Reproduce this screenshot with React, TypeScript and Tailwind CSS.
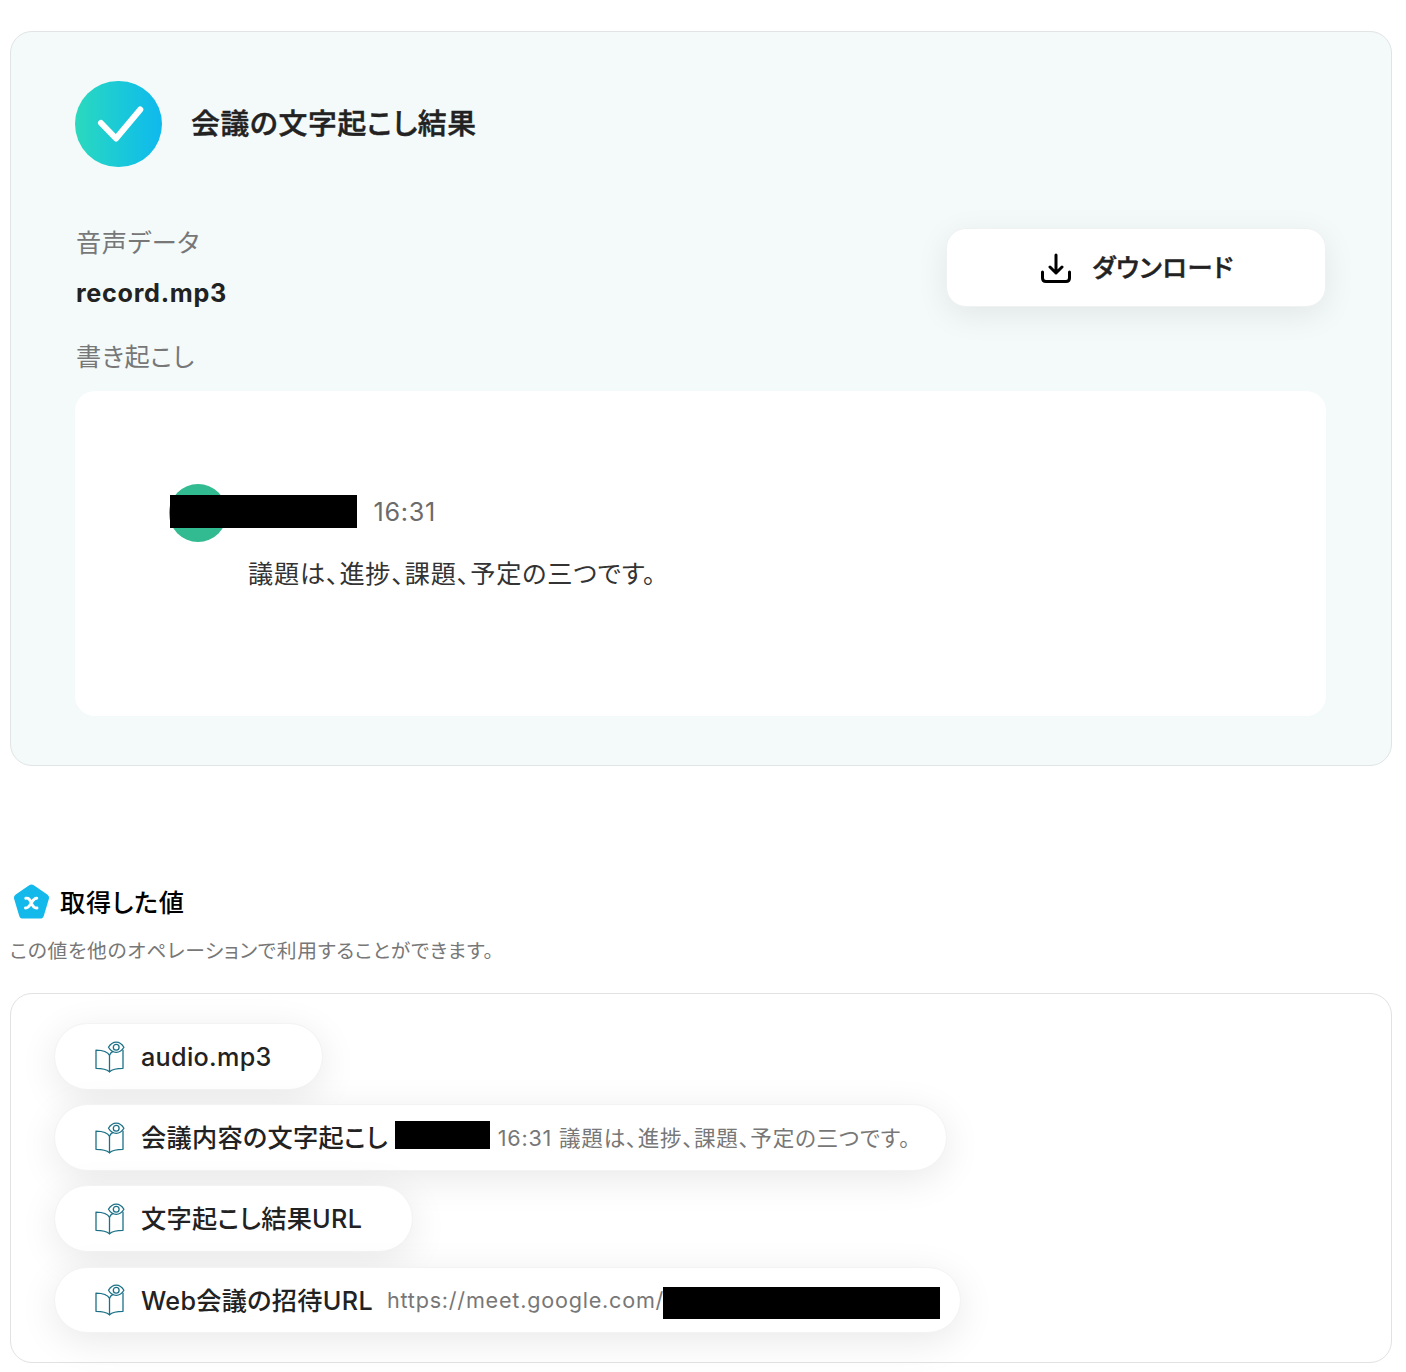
import React from 'react';

interface ValueItem {
  id: string;
  label: string;
  width: string;
  detail?: React.ReactNode;
}

const BookEyeIcon: React.FC = () => (
  <svg className="w-[30px] h-8 shrink-0 mt-px" viewBox="0 0 30 32" fill="none" stroke="#1b7187" strokeWidth="1.3" strokeLinejoin="round" strokeLinecap="round">
    <path d="M14.5 14.2C12.6 10.6 7.6 9.2 1 9.1V27.3C7.5 27.3 11.6 28.2 14.5 30.8C17.2 28.2 21.5 27.3 28 27.3V9.2" />
    <path d="M14.5 30.8V14.2C15.1 12.6 16.2 11.4 18 10.4" />
    <path d="M13.5 6.3C15.5 2.8 18.2 1.1 21.2 1.1S26.9 2.8 28.9 6.3C26.9 9.8 24.2 11.3 21.2 11.3S15.5 9.8 13.5 6.3Z" />
    <circle cx="21.2" cy="6.3" r="2.9" />
  </svg>
);

const items: ValueItem[] = [
  { id: 'audio', label: 'audio.mp3', width: 'w-[269px]' },
  {
    id: 'transcript',
    label: '会議内容の文字起こし',
    width: 'w-[893px]',
    detail: (
      <>
        <span className="w-[95px] h-7 ml-[7px] mb-[5px] bg-black shrink-0" />
        <span className="pt-px ml-[8px] text-[21.6px] tracking-[0.036em] text-[#777]">16:31 議題は、進捗、課題、予定の三つです。</span>
      </>
    ),
  },
  { id: 'result-url', label: '文字起こし結果URL', width: 'w-[359px]' },
  {
    id: 'invite-url',
    label: 'Web会議の招待URL',
    width: 'w-[907px]',
    detail: (
      <>
        <span className="ml-[14px] text-[21.6px] tracking-[0.036em] text-[#777]">https://meet.google.com/</span>
        <span className="w-[277px] h-8 mt-[6px] -ml-px bg-black shrink-0" />
      </>
    ),
  },
];

const App: React.FC = () => {
  return (
    <div className="h-[1372px] overflow-hidden bg-white pt-[31px] pl-[10px] pr-[14px] text-[#222] whitespace-nowrap font-[Inter,'Noto_Sans_CJK_JP',sans-serif] [font-feature-settings:'palt']">
      <section className="h-[735px] rounded-[22px] border border-[#e0e4e4] bg-[#f4fafa] pt-[49px] pl-16 pr-[65px]">
        <div className="flex items-center gap-[29px]">
          <div className="w-[87px] h-[86px] rounded-full bg-linear-to-r from-[#2bd9bd] to-[#10b9ee]">
            <svg className="w-full h-full" viewBox="0 0 87 86" fill="none" stroke="#fff" strokeWidth="6" strokeLinecap="round" strokeLinejoin="round">
              <path d="M26 42L41 57.5L65.3 28.5" />
            </svg>
          </div>
          <h1 className="text-[28.8px] font-medium [-webkit-text-stroke:0.5px_#222] leading-10 tracking-[0.025em]">会議の文字起こし結果</h1>
        </div>

        <div className="flex justify-between mt-[55px]">
          <div className="pl-px">
            <p className="h-10 pt-px leading-10 text-[25.2px] tracking-[0.025em] text-[#777]">音声データ</p>
            <p className="h-10 mt-[11px] leading-10 text-[25.2px] font-bold tracking-[0.028em]">record.mp3</p>
            <p className="h-10 mt-[23px] pt-px leading-10 text-[25.2px] tracking-[0.025em] text-[#777]">書き起こし</p>
          </div>
          <button className="flex items-center justify-center gap-[21px] w-[380px] h-[79px] mt-[6px] rounded-[20px] border border-[#f0f2f2] bg-white shadow-[0_8px_32px_rgba(0,0,0,0.08)] pl-[3px]">
            <svg className="w-[30px] h-[30px]" viewBox="0 0 30 30" fill="none" stroke="#000" strokeWidth="3" strokeLinecap="round" strokeLinejoin="round">
              <path d="M15 2V20M9 14L15 20L21 14" />
              <path d="M1.5 19V25Q1.5 28.5 5 28.5H25Q28.5 28.5 28.5 25V19" />
            </svg>
            <span className="pt-[2px] text-[25.2px] font-medium [-webkit-text-stroke:0.5px_#222] tracking-[0.025em]">ダウンロード</span>
          </button>
        </div>

        <div className="h-[325px] mt-[15px] rounded-[20px] bg-white pt-[93px] pl-[94px]">
          <div className="relative flex items-center h-[58px]">
            <div className="w-[58px] h-[58px] rounded-full bg-[#32bb90]" />
            <div className="absolute left-px top-[11px] w-[187px] h-[33px] bg-black" />
            <span className="ml-[146.5px] text-[25.2px] tracking-[0.028em] text-[#6b6b6b]">16:31</span>
          </div>
          <p className="mt-3 ml-[79px] leading-10 text-[25.2px] tracking-[0.032em] text-[#333]">議題は、進捗、課題、予定の三つです。</p>
        </div>
      </section>

      <section className="pt-[116px]">
        <div className="flex items-center h-10 pl-1 text-black">
          <svg className="w-[35px] h-[35px] mr-[11px] -mt-[2px]" viewBox="0 0 35 35" fill="none">
            <path d="M17.5 4.5L31 13.8L26 30.5H9L4 13.8Z" fill="#14b9eb" stroke="#14b9eb" strokeWidth="8" strokeLinejoin="round" />
            <path d="M11.8 14.2C14.8 13.8 15.8 15.4 17.3 19S20 24.4 23 24M22.8 14.2C20.3 14 19 16 17.3 19S14.4 24.2 11.5 24" stroke="#fff" strokeWidth="2.9" strokeLinecap="round" />
          </svg>
          <h2 className="pt-[3px] text-[25.2px] font-medium tracking-[0.03em]">取得した値</h2>
        </div>
        <p className="mt-[13px] h-8 leading-8 text-[19.8px] tracking-[0.036em] text-[#777]">この値を他のオペレーションで利用することができます。</p>

        <div className="flex flex-col gap-[14.5px] h-[370px] mt-[26px] rounded-[22px] border border-[#e2e2e2] pt-[29px] pl-[43px]">
          {items.map(item => (
            <div key={item.id} className={`flex items-center h-[66.7px] shrink-0 rounded-full border border-[#f3f3f3] bg-white pl-10 shadow-[0_8px_38px_rgba(0,0,0,0.09)] ${item.width}`}>
              <BookEyeIcon />
              <span className="ml-4 pt-[3px] text-[25.2px] font-medium tracking-[0.012em]">{item.label}</span>
              {item.detail}
            </div>
          ))}
        </div>
      </section>
    </div>
  );
};

export default App;
